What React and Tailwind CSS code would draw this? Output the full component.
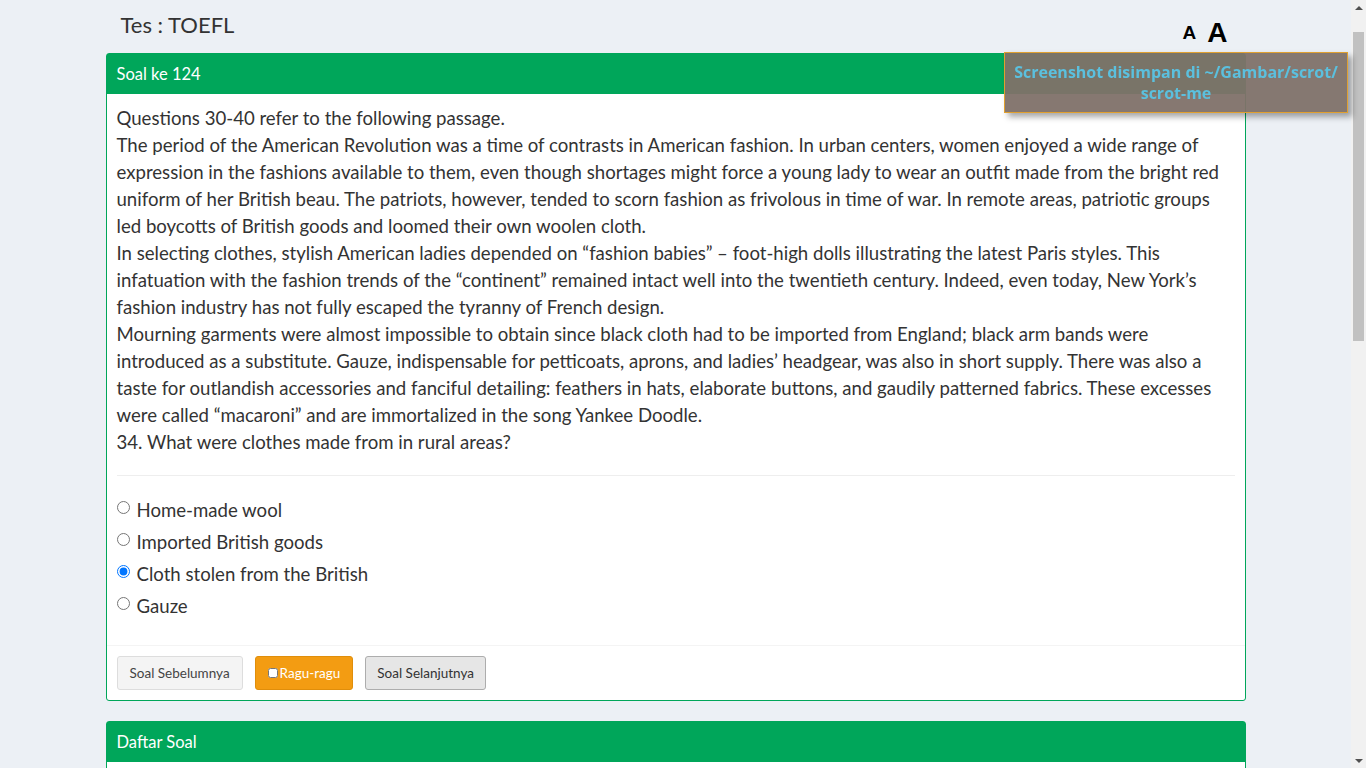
import { useState } from "react";

const passage = [
  "Questions 30-40 refer to the following passage.",
  "The period of the American Revolution was a time of contrasts in American fashion. In urban centers, women enjoyed a wide range of expression in the fashions available to them, even though shortages might force a young lady to wear an outfit made from the bright red uniform of her British beau. The patriots, however, tended to scorn fashion as frivolous in time of war. In remote areas, patriotic groups led boycotts of British goods and loomed their own woolen cloth.",
  "In selecting clothes, stylish American ladies depended on \u201cfashion babies\u201d \u2013 foot-high dolls illustrating the latest Paris styles. This infatuation with the fashion trends of the \u201ccontinent\u201d remained intact well into the twentieth century. Indeed, even today, New York\u2019s fashion industry has not fully escaped the tyranny of French design.",
  "Mourning garments were almost impossible to obtain since black cloth had to be imported from England; black arm bands were introduced as a substitute. Gauze, indispensable for petticoats, aprons, and ladies\u2019 headgear, was also in short supply. There was also a taste for outlandish accessories and fanciful detailing: feathers in hats, elaborate buttons, and gaudily patterned fabrics. These excesses were called \u201cmacaroni\u201d and are immortalized in the song Yankee Doodle.",
  "34. What were clothes made from in rural areas?",
];

const options = [
  "Home-made wool",
  "Imported British goods",
  "Cloth stolen from the British",
  "Gauze",
];

export default function App() {
  const [answer, setAnswer] = useState(2);

  return (
    <div className="min-h-[1200px] bg-[#ecf0f5] font-['Lato',sans-serif] text-[#333]">
      <div className="w-[1351px]">
        <div className="mx-auto w-[1170px] px-[15px]">
          {/* title row */}
          <div className="flex h-[53px] items-start justify-between">
            <h1 className="pl-[15px] pt-[10px] text-[22px] leading-[30px] text-[#333]">
              Tes : TOEFL
            </h1>
            <div className="mt-[18px] flex h-[30px] items-center gap-[11px] pr-[18px] font-['Liberation_Sans',sans-serif] font-bold text-black">
              <span className="text-[19px] leading-[20px]">A</span>
              <span className="text-[28px] leading-[30px]">A</span>
            </div>
          </div>

          {/* question panel */}
          <div className="rounded-[3px] border border-[#00a65a] bg-white">
            <div className="bg-[#00a65a] px-[10px] py-[10px] text-[16.5px] leading-[20px] text-white">
              Soal ke 124
            </div>
            <div className="px-[10px] pt-[11px]">
              <div className="text-[18.6px] leading-[27px] text-[#333]">
                {passage.map((p, i) => (
                  <p key={i}>{p}</p>
                ))}
              </div>
              <hr className="mt-[19px] mb-[23px] border-t border-[#eee]" />
              <div className="flex flex-col gap-[10px] pb-[28px]">
                {options.map((o, i) => (
                  <label key={i} className="flex items-center gap-[7px] text-[18.6px] leading-[22px]">
                    <input
                      type="radio"
                      name="jawaban"
                      checked={answer === i}
                      onChange={() => setAnswer(i)}
                      className="relative -top-[3px] m-0 h-[13px] w-[13px]"
                    />
                    {o}
                  </label>
                ))}
              </div>
            </div>
            <div className="flex gap-[12px] border-t border-[#f4f4f4] px-[10px] py-[10px]">
              <button className="h-[34px] rounded-[3px] border border-[#ddd] bg-[#f4f4f4] px-[12px] text-[13.5px] text-[#444]">
                Soal Sebelumnya
              </button>
              <button className="flex h-[34px] items-center gap-[2px] rounded-[3px] border border-[#e08e0b] bg-[#f39c12] px-[12px] text-[13.5px] text-white">
                <input type="checkbox" className="m-0 h-[10px] w-[10px]" />
                Ragu-ragu
              </button>
              <button className="h-[34px] rounded-[3px] border border-[#adadad] bg-[#e6e6e6] px-[11px] text-[13.5px] text-[#333]">
                Soal Selanjutnya
              </button>
            </div>
          </div>

          {/* question list panel */}
          <div className="mt-[20px] rounded-[3px] border border-[#00a65a] bg-white">
            <div className="bg-[#00a65a] px-[10px] py-[10px] text-[16.5px] leading-[20px] text-white">
              Daftar Soal
            </div>
            <div className="h-[300px]" />
          </div>
        </div>
      </div>

      {/* browser scrollbar */}
      <div className="fixed right-0 top-0 flex h-screen w-[15px] flex-col items-center bg-[#f1f1f1]">
        <div className="flex h-[15px] items-center justify-center">
          <div className="h-0 w-0 border-x-[4px] border-b-[4px] border-x-transparent border-b-[#505050]" />
        </div>
        <div className="mt-[17px] h-[309px] w-[11px] bg-[#c1c1c1]" />
        <div className="flex-1" />
        <div className="flex h-[15px] items-center justify-center">
          <div className="h-0 w-0 border-x-[4px] border-t-[4px] border-x-transparent border-t-[#505050]" />
        </div>
      </div>

      {/* scrot notification */}
      <div className="fixed left-[1004px] top-[52px] w-[344px] border border-[#e0a030] bg-[#7f7169]/95 px-[8px] pt-[9px] pb-[8px] text-center font-['Open_Sans',sans-serif] text-[16px] font-bold leading-[21px] text-[#5bc0de] shadow-[4px_4px_6px_rgba(0,0,0,0.35)]">
        Screenshot disimpan di ~/Gambar/scrot/
        <br />
        scrot-me
      </div>
    </div>
  );
}
